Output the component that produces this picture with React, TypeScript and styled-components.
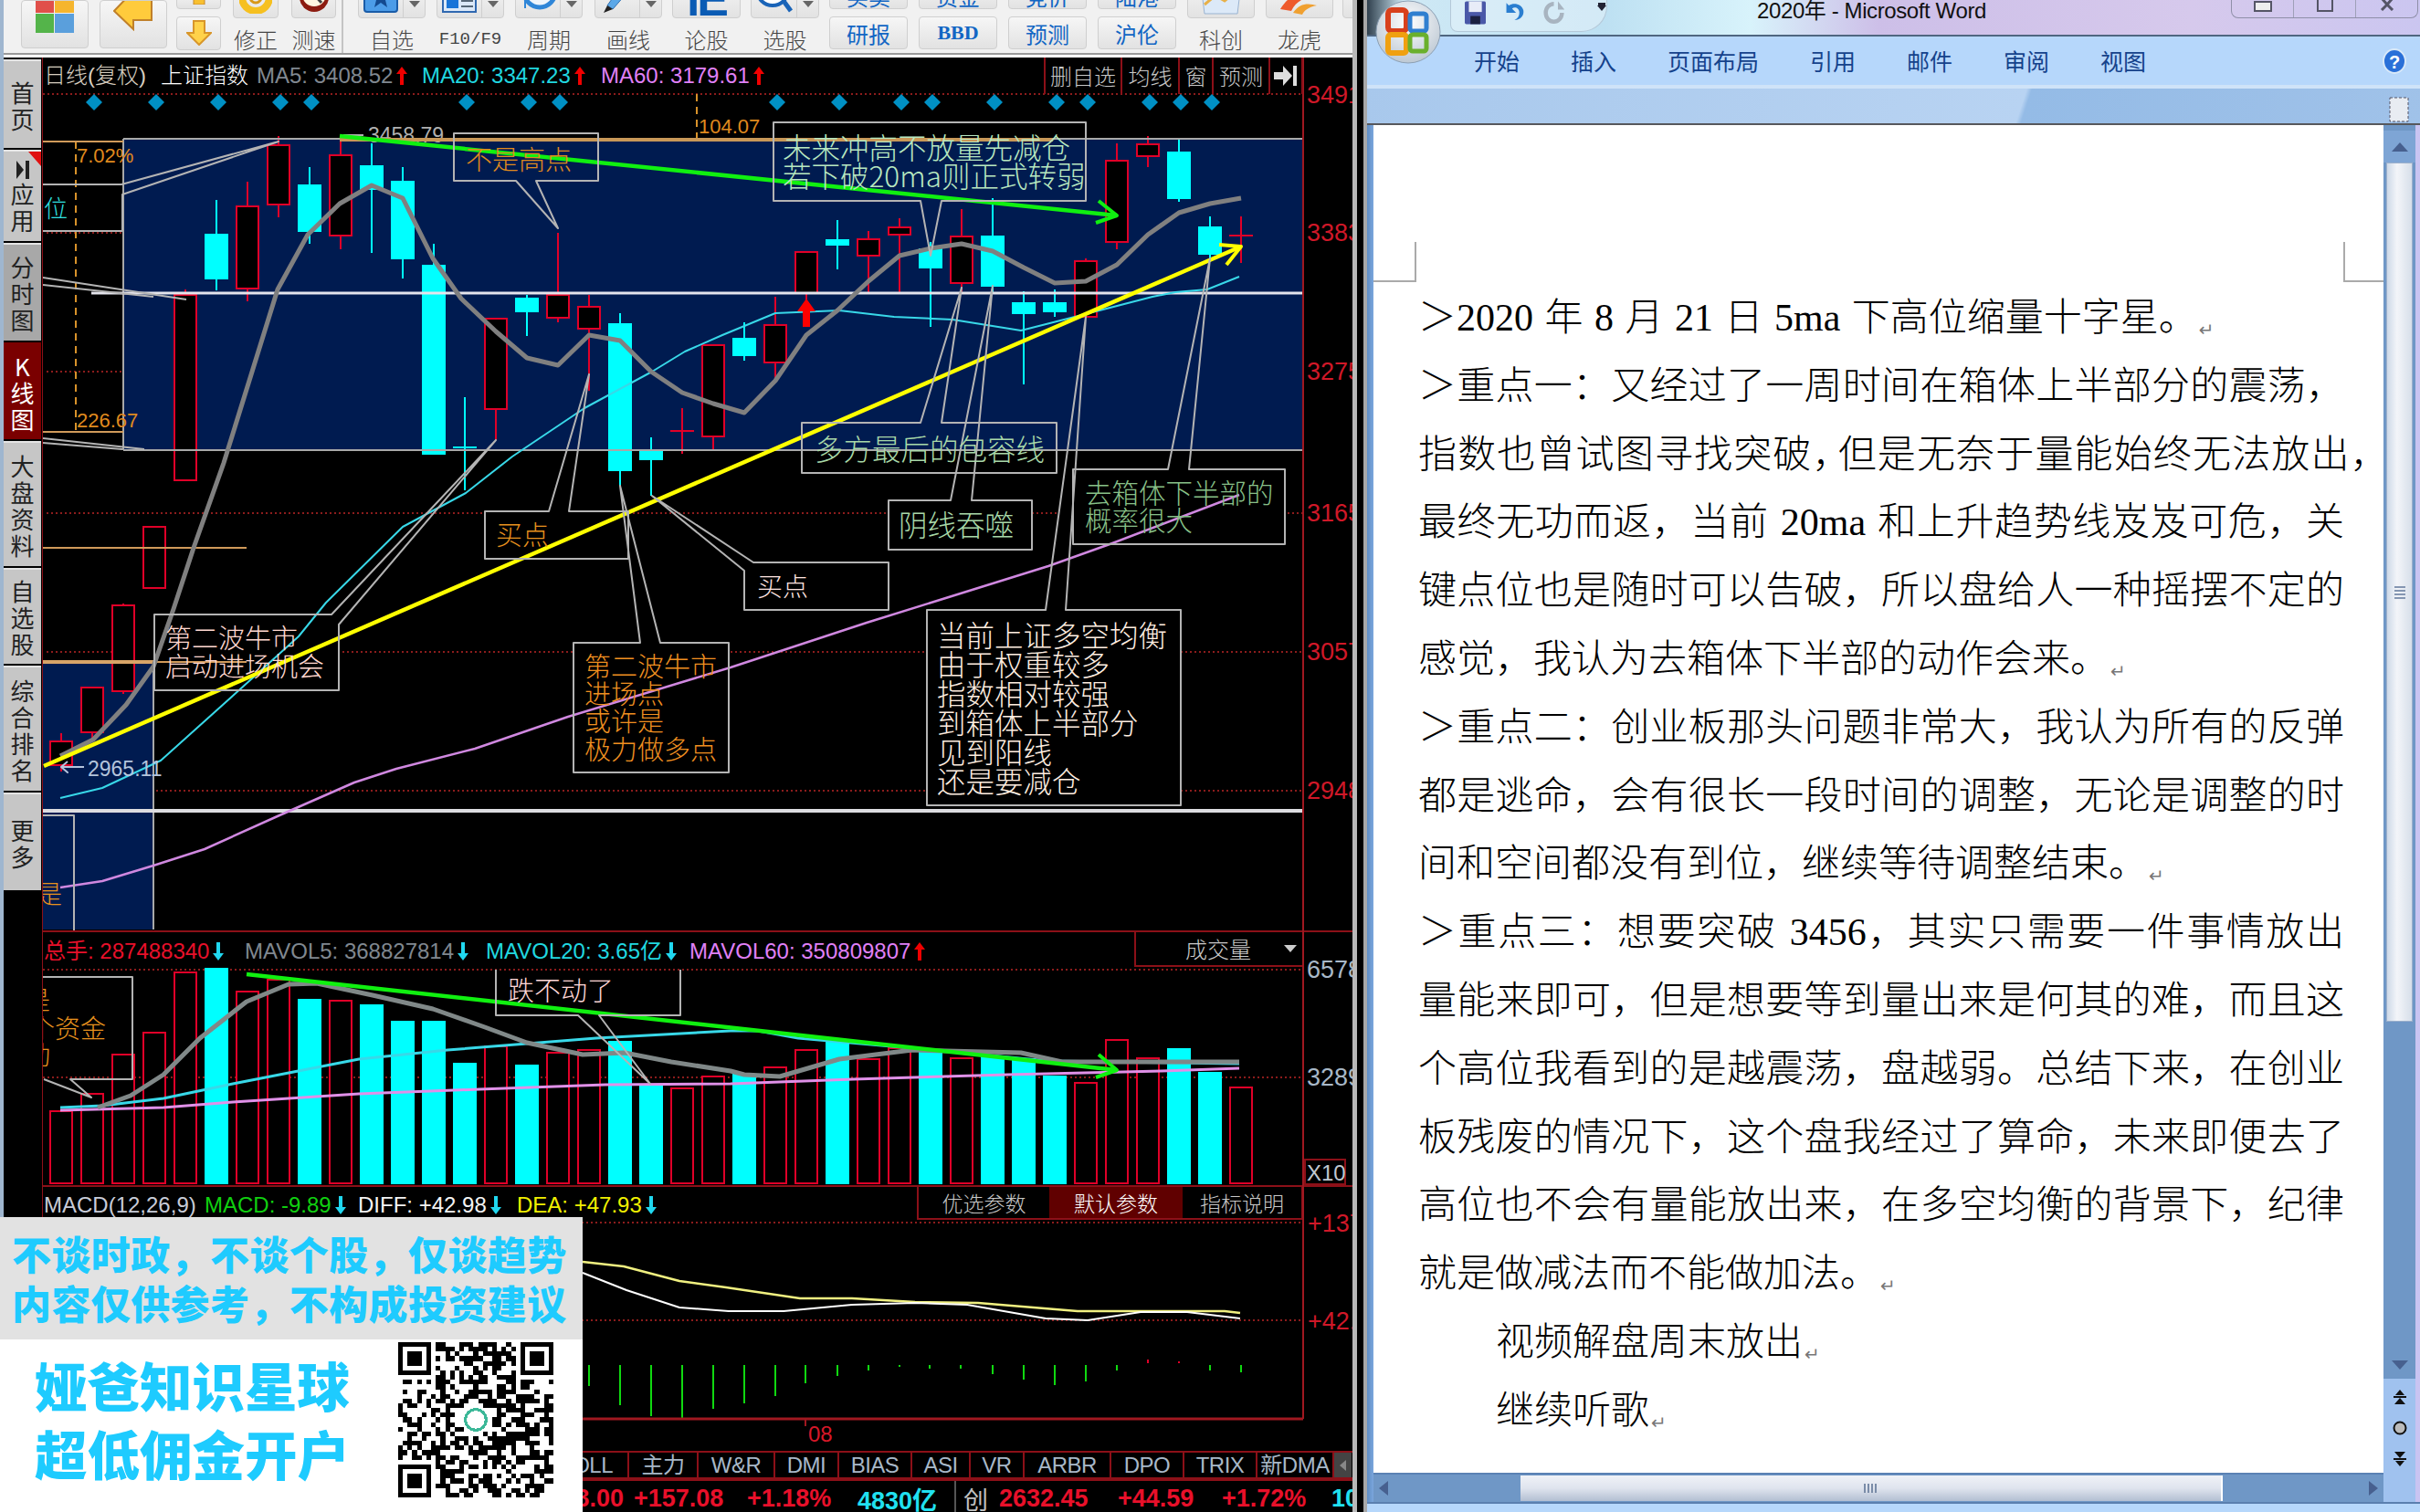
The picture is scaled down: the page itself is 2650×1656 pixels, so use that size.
import React from "react";
import styled, { createGlobalStyle } from "styled-components";

const SANS = `"Liberation Sans", "Noto Sans CJK SC", sans-serif`;
const CJK = `"Noto Sans CJK SC", "Liberation Sans", sans-serif`;
const RED = "#e00028";
const DARK = "#8c1018";

const Global = createGlobalStyle`
  html, body { margin: 0; padding: 0; background: #000; overflow: hidden; }
  #root { width: 2650px; height: 1656px; }
`;

const Page = styled.div`
  position: relative; display: flex; width: 2650px; height: 1656px; overflow: hidden;
`;

/* ---------- trading window ---------- */
const TradeWindow = styled.div`
  width: 1481px; height: 1656px; flex: none; display: flex; flex-direction: column;
  border-left: 4px solid #9fb6cf; box-sizing: border-box; overflow: hidden; background: #000;
`;
const Toolbar = styled.div`
  height: 63px; flex: none; box-sizing: border-box; display: flex; align-items: flex-end; overflow: hidden;
  background: #f1f1f1; border-bottom: 3px solid #fff; box-shadow: inset 0 -2px 0 #9a9a9a;
  padding-left: 19px; padding-bottom: 2px; font-family: ${CJK}; color: #444; font-weight: 300;
`;
const ToolItem = styled.div<{ $w: number; $ml: number }>`
  width: ${(p) => p.$w}px; margin-left: ${(p) => p.$ml}px; flex: none; display: flex; flex-direction: column;
  align-items: stretch; padding-bottom: 3px;
`;
const Tile = styled.div<{ $h: number; $pb?: number }>`
  height: ${(p) => p.$h}px; box-sizing: border-box; display: flex; justify-content: center; align-items: flex-end;
  padding-bottom: ${(p) => p.$pb ?? 4}px; overflow: hidden;
  background: linear-gradient(#f6f6f6, #e2e2e2); border: 1px solid #cfcfcf; border-radius: 4px;
`;
const BigTile = styled(Tile)`
  margin-bottom: 2px;
`;
const SplitTile = styled(Tile)`
  justify-content: flex-start; padding: 0;
`;
const SplitIcon = styled.div`
  flex: 1; height: 100%; box-sizing: border-box; display: flex; justify-content: center; align-items: flex-end; padding-bottom: 4px;
`;
const SplitArrow = styled.div`
  width: 24px; height: 100%; box-sizing: border-box; border-left: 1px solid #cfcfcf; display: flex; justify-content: center; padding-top: 22px;
  &::after { content: ""; width: 0; height: 0; border-left: 6px solid transparent; border-right: 6px solid transparent; border-top: 7px solid #666; margin-top: -2px; }
`;
const ToolLabel = styled.div<{ $mono?: boolean }>`
  height: 24px; margin-top: 11px; line-height: 24px; text-align: center; white-space: nowrap;
  font-size: ${(p) => (p.$mono ? 19 : 24)}px; font-family: ${(p) => (p.$mono ? `"Liberation Mono", monospace` : CJK)};
`;
const ToolSep = styled.div`
  width: 2px; height: 60px; margin-left: 6px; background: #c4c4c4; flex: none;
`;
const IeMark = styled.span`
  font: bold 52px/40px "Liberation Sans", sans-serif; color: #0a5bb4; letter-spacing: -3px;
`;
const SmallStack = styled.div<{ $ml: number }>`
  width: 49px; margin-left: ${(p) => p.$ml}px; flex: none; display: flex; flex-direction: column; gap: 8px; padding-bottom: 3px;
`;
const QuoteGrid = styled.div`
  width: 381px; margin-left: 11px; flex: none; display: grid; grid-template-columns: repeat(4, 86px);
  grid-template-rows: 30px 36px; gap: 8px 12px; padding-bottom: 4px;
`;
const QuoteBtn = styled.div`
  display: flex; align-items: center; justify-content: center; overflow: hidden; box-sizing: border-box;
  background: linear-gradient(#f6f6f6, #e2e2e2); border: 1px solid #cfcfcf; border-radius: 4px; color: #1266c4; font-size: 24px; font-weight: 400;
`;
const BbdText = styled.span`
  font: bold 22px "Liberation Serif", serif;
`;

const Body = styled.div`
  flex: 1; min-height: 0; display: flex;
`;
const Sidebar = styled.div`
  width: 42px; flex: none; display: flex; flex-direction: column; gap: 2px; box-sizing: border-box; padding: 2px 1px 0 0; background: #000;
`;
const SideTab = styled.div<{ $h: number; $tone?: "light" | "mid" | "active" }>`
  position: relative; height: ${(p) => p.$h}px; flex: none; box-sizing: border-box; display: flex; flex-direction: column; align-items: center; justify-content: center;
  font-family: ${CJK}; font-size: 26px; line-height: 29px; font-weight: 400;
  color: ${(p) => (p.$tone === "active" ? "#fff" : "#222")};
  background: ${(p) => (p.$tone === "active" ? "#7a0000" : p.$tone === "mid" ? "#a8a8a8" : "#c6c6c6")};
  border-top: 2px solid ${(p) => (p.$tone === "active" ? "#7a0000" : "#e4e4e4")};
`;
const SideChar = styled.span`
  display: block;
`;
const SideCorner = styled.div`
  position: absolute; top: 0; right: 0; width: 0; height: 0; border-top: 16px solid #e01010; border-left: 14px solid transparent;
`;
const ChartColumn = styled.div`
  position: relative; width: 1435px; flex: none; box-sizing: border-box; border-left: 1px solid ${DARK}; display: flex; flex-direction: column; overflow: hidden; background: #000;
`;
const LegendRow = styled.div<{ $h: number; $top?: boolean }>`
  height: ${(p) => p.$h}px; flex: none; box-sizing: border-box; display: flex; align-items: center; padding-left: 1px; white-space: nowrap;
  font-family: ${SANS}; font-size: 24px; line-height: 26px;
  border-top: ${(p) => (p.$top ? `2px solid ${DARK}` : "none")};
`;
const LegendItem = styled.div<{ $w: number; $c: string; $cjk?: boolean }>`
  width: ${(p) => p.$w}px; height: 26px; flex: none; display: flex; align-items: center; gap: 4px; color: ${(p) => p.$c};
  font-weight: ${(p) => (p.$cjk ? 300 : 400)};
`;
const RightGroup = styled.div`
  margin-left: auto; margin-right: 54px; height: 100%; display: flex; z-index: 2;
`;
const MiniBtn = styled.div<{ $w: number }>`
  width: ${(p) => p.$w}px; box-sizing: border-box; display: flex; align-items: center; justify-content: center; border-left: 2px solid ${DARK};
  color: #c8c8c8; font-family: ${CJK}; font-size: 24px; font-weight: 300;
  &:last-child { border-right: 2px solid ${DARK}; }
`;
const VolSelect = styled.div`
  margin-left: auto; margin-right: 54px; width: 185px; height: 38px; align-self: flex-start; box-sizing: border-box; border-left: 2px solid ${DARK}; border-bottom: 2px solid ${DARK};
  display: flex; align-items: center; padding-left: 54px; gap: 36px; color: #ccc; font-family: ${CJK}; font-size: 24px; font-weight: 300;
  &::after { content: ""; width: 0; height: 0; border-left: 7px solid transparent; border-right: 7px solid transparent; border-top: 8px solid #ccc; }
`;
const MacdTabs = styled.div`
  margin-left: auto; margin-right: 54px; height: 36px; align-self: flex-start; display: flex; box-sizing: border-box; border: 2px solid ${DARK}; border-top: none;
`;
const MacdTab = styled.div<{ $w: number; $on?: boolean }>`
  width: ${(p) => p.$w}px; display: flex; align-items: center; justify-content: center; font-family: ${CJK}; font-size: 23px; font-weight: 300;
  color: ${(p) => (p.$on ? "#fff" : "#c8c8c8")}; background: ${(p) => (p.$on ? "#600000" : "transparent")};
`;
const Canvas = styled.svg<{ $h: number }>`
  display: block; width: 1434px; height: ${(p) => p.$h}px; flex: none; overflow: visible;
`;
const DateRow = styled.div`
  height: 35px; flex: none; box-sizing: border-box; padding-left: 838px; color: #d81828; font: 24px/34px ${SANS};
`;
const IndexTabs = styled.div`
  height: 33px; flex: none; display: flex; box-sizing: border-box; border-top: 2px solid ${DARK}; border-bottom: 4px solid ${DARK}; font: 24px/27px ${SANS}; color: #a8b8c8; letter-spacing: -0.5px;
`;
const IndexTab = styled.div<{ $w: number; $pad?: number }>`
  width: ${(p) => p.$w}px; flex: none; box-sizing: border-box; border-right: 2px solid ${DARK}; text-align: ${(p) => (p.$pad ? "right" : "center")}; padding-right: ${(p) => p.$pad ?? 0}px; font-family: ${SANS}; white-space: nowrap;
`;
const IndexScroll = styled.div`
  width: 19px; flex: none; background: #444; display: flex; align-items: center; justify-content: center;
  &::after { content: ""; border-right: 7px solid #888; border-top: 6px solid transparent; border-bottom: 6px solid transparent; }
`;
const StatusRow = styled.div`
  flex: 1; display: flex; align-items: center; font: bold 27px ${SANS}; color: #e8102a; white-space: nowrap; box-sizing: border-box; padding-bottom: 1px;
`;
const StatusCell = styled.div<{ $w: number; $c?: string; $pad?: number; $weight?: number }>`
  width: ${(p) => p.$w}px; flex: none; color: ${(p) => p.$c ?? "inherit"}; text-align: ${(p) => (p.$pad ? "right" : "left")}; padding-right: ${(p) => p.$pad ?? 0}px; box-sizing: border-box; font-weight: ${(p) => p.$weight ?? 400};
`;
const StatusSep = styled.div`
  width: 2px; height: 100%; background: #555; margin-right: 8px; flex: none;
`;

/* svg parts */
const Wick = styled.line<{ $c: string }>`stroke: ${(p) => p.$c}; stroke-width: 2;`;
const Body3 = styled.rect<{ $up?: boolean }>`
  fill: ${(p) => (p.$up ? "#000" : "#00ffff")}; stroke: ${(p) => (p.$up ? RED : "#00ffff")}; stroke-width: 2;
`;
const Dotted = styled.line<{ $c?: string }>`stroke: ${(p) => p.$c ?? "#8c1c1c"}; stroke-width: 2; stroke-dasharray: 2 3;`;
const Trend = styled.polyline<{ $c: string; $w: number }>`
  fill: none; stroke: ${(p) => p.$c}; stroke-width: ${(p) => p.$w}; stroke-linejoin: round;
`;
const Plain = styled.line<{ $c: string; $w: number }>`stroke: ${(p) => p.$c}; stroke-width: ${(p) => p.$w};`;
const Navy = styled.rect`fill: #001b50;`;
const CalloutPath = styled.path`fill: none; stroke: #b4b4b4; stroke-width: 2; stroke-linejoin: round;`;
const NoteText = styled.text<{ $c: string; $s: number }>`
  fill: ${(p) => p.$c}; font-size: ${(p) => p.$s}px; font-family: ${CJK}; font-weight: 300;
`;
const NumText = styled.text<{ $c: string; $s: number }>`
  fill: ${(p) => p.$c}; font-size: ${(p) => p.$s}px; font-family: ${SANS};
`;
const Diamond = styled.polygon`fill: #0090c4;`;

/* ---------- overlay banner ---------- */
const Banner = styled.div`
  position: absolute; left: 0; top: 1333px; width: 638px; height: 323px; z-index: 5; background: #fff; display: flex; flex-direction: column;
`;
const BannerTop = styled.div`
  height: 134px; flex: none; background: #e2e2e2; box-sizing: border-box; padding: 12px 0 0 13px; font: 900 43px/54px ${CJK}; color: #1ecbff; white-space: nowrap; letter-spacing: 0.4px;
`;
const BannerBottom = styled.div`
  flex: 1; display: flex; box-sizing: border-box; padding-left: 38px;
`;
const BannerText = styled.div`
  width: 398px; flex: none; padding-top: 12px; font: 900 57.5px/75px ${CJK}; color: #1ecbff; white-space: nowrap;
`;
const QrBox = styled.svg`
  width: 170px; height: 170px; margin-top: 3px; flex: none; display: block;
`;

/* ---------- word ---------- */
const Gutter = styled.div`
  width: 16px; flex: none; box-sizing: border-box; background: linear-gradient(90deg, #b8b8b8 0 5px, #000 5px 12px, #a8a8a8 12px);
`;
const WordWindow = styled.div`
  position: relative; flex: 1; min-width: 0; display: flex; flex-direction: column; font-family: ${CJK};
`;
const TitleBar = styled.div`
  height: 38px; flex: none; display: flex; align-items: flex-start; box-sizing: border-box;
  background: linear-gradient(90deg, #30404e 0, #cfe9f5 40px, #bde0f2 260px, #d8f3fb 420px, #cdbfe8 560px, #d6c9ec 900px, #cbc6f0 100%);
`;
const Qat = styled.div`
  width: 172px; height: 35px; margin-left: 91px; flex: none; box-sizing: border-box; position: relative; display: flex; align-items: flex-start; padding-left: 15px; gap: 19px;
  background: rgba(230, 242, 250, 0.55); border: 1px solid #b4c8d8; border-top: none; border-radius: 0 0 28px 8px;
`;
const QatArrow = styled.div`
  margin: 6px 0 0 17px; flex: none; width: 0; height: 0; border-left: 5px solid transparent; border-right: 5px solid transparent; border-top: 6px solid #223; box-shadow: 0 -4px 0 -1px #223;
`;
const TitleText = styled.div`
  flex: 1; text-align: center; padding-right: 104px; font: 24px/24px ${SANS}; color: #111; white-space: nowrap; letter-spacing: -0.4px;
`;
const WinButtons = styled.div`
  width: 205px; height: 20px; margin-right: 2px; flex: none; display: flex; box-sizing: border-box; border: 1px solid #8f8fa8; border-top: none; border-radius: 0 0 8px 8px;
`;
const WinBtn = styled.div`
  flex: 1; display: flex; align-items: flex-start; justify-content: center; border-left: 1px solid #9fa0b8;
  &:first-child { border-left: none; }
`;
const TabBar = styled.div`
  position: relative; height: 59px; flex: none; box-sizing: border-box; display: flex; align-items: center; gap: 56px; padding: 0 0 2px 117px;
  background: #b6d7fb; border-top: 2px solid #4f6680; border-bottom: 4px solid #cfe3f8; font-size: 25px; font-weight: 400; color: #15428b;
`;
const WordTab = styled.span`flex: none; white-space: nowrap;`;
const HelpWrap = styled.div`
  position: absolute; right: 15px; top: 12px;
`;
const RibbonBand = styled.div`
  position: relative; height: 40px; flex: none; box-sizing: border-box; border-bottom: 2px solid #57585c;
  background: linear-gradient(108deg, #a8c8ec 0, #b8d3f2 62%, #94bbe6 62.5%, #a0c2e9 100%);
`;
const RulerIcon = styled.svg`
  position: absolute; right: 10px; top: 8px; width: 26px; height: 34px; z-index: 2;
`;
const OfficeBtn = styled.svg`
  position: absolute; left: 9px; top: 0; width: 72px; height: 70px; z-index: 3;
`;
const MainRow = styled.div`
  flex: 1; min-height: 0; display: flex; background: #6f97c6;
`;
const LeftEdge = styled.div`
  width: 7px; flex: none; background: linear-gradient(90deg, #5f8dc4, #7ba6dc);
`;
const RightEdge = styled.div`
  width: 5px; flex: none; background: #c9c4f2;
`;
const DocColumn = styled.div`
  flex: 1; min-width: 0; display: flex; flex-direction: column;
`;
const DocPage = styled.div`
  position: relative; flex: 1; min-height: 0; background: #fff; box-sizing: border-box; padding: 174px 0 0 49px; overflow: hidden;
  font-family: "Liberation Serif", "Noto Sans CJK SC", serif; font-weight: 300; font-size: 42px; color: #000; word-spacing: 2px;
`;
const DocLine = styled.div<{ $width?: number; $indent?: boolean; $tracking?: number }>`
  height: 74.8px; line-height: 74.8px; box-sizing: border-box;
  padding-left: ${(p) => (p.$indent ? 85 : 0)}px;
  letter-spacing: ${(p) => p.$tracking ?? 0}px;
  width: ${(p) => (p.$width ? `${p.$width}px` : "auto")};
  white-space: ${(p) => (p.$width ? "normal" : "nowrap")};
  text-align: ${(p) => (p.$width ? "justify" : "left")};
  text-align-last: ${(p) => (p.$width ? "justify" : "left")};
`;
const Squeeze = styled.span`margin-right: -15px;`;
const ParaMark = styled.span`
  font: 20px "DejaVu Sans", sans-serif; color: #777; margin-left: 2px; vertical-align: -6px;
`;
const CornerMark = styled.div<{ $side: "left" | "right" }>`
  position: absolute; top: 128px; ${(p) => p.$side}: 0; width: ${(p) => (p.$side === "left" ? 47 : 44)}px; height: 44px; box-sizing: border-box; border-bottom: 2px solid #aaa;
  ${(p) => (p.$side === "left" ? "border-right" : "border-left")}: 2px solid #aaa;
`;
const HScroll = styled.div`
  height: 32px; flex: none; position: relative; display: flex; align-items: center; box-sizing: border-box; background: #6f97c6; border-top: 2px solid #5b82b4; padding-left: 161px;
`;
const HThumb = styled.div`
  width: 769px; height: 28px; box-sizing: border-box; display: flex; align-items: center; justify-content: center; background: linear-gradient(#f0f2f7, #dfe4ee 50%, #b3bfd2); border-right: 2px solid #fff;
  &::after { content: ""; width: 16px; height: 10px; background: repeating-linear-gradient(90deg, #7a8ca8 0 2px, transparent 2px 4px); }
`;
const Tri = styled.div<{ $dir: "left" | "right" | "up" | "down" }>`
  width: 0; height: 0; flex: none;
  ${(p) =>
    p.$dir === "left" ? "border-right: 10px solid #47608f; border-top: 8px solid transparent; border-bottom: 8px solid transparent;" :
    p.$dir === "right" ? "border-left: 10px solid #47608f; border-top: 8px solid transparent; border-bottom: 8px solid transparent;" :
    p.$dir === "up" ? "border-bottom: 10px solid #47608f; border-left: 9px solid transparent; border-right: 9px solid transparent;" :
    "border-top: 10px solid #47608f; border-left: 9px solid transparent; border-right: 9px solid transparent;"}
`;
const HLeft = styled.div`position: absolute; left: 6px; top: 7px;`;
const HRight = styled.div`position: absolute; right: 6px; top: 7px;`;
const VScroll = styled.div`
  width: 35px; flex: none; display: flex; flex-direction: column; background: #6f97c6; box-sizing: border-box; padding-top: 6px;
`;
const VUp = styled.div`
  height: 35px; flex: none; display: flex; align-items: center; justify-content: center; background: #7ea5d5;
`;
const VThumb = styled.div`
  height: 941px; margin: 0 3px; flex: none; box-sizing: border-box; display: flex; align-items: center; justify-content: center;
  background: linear-gradient(90deg, #cdd9e8, #f3f5f9 40%, #d7dfea); border: 1px solid #9cb0cc;
  &::after { content: ""; width: 12px; height: 14px; background: repeating-linear-gradient(#8496b2 0 2px, transparent 2px 4px); }
`;
const VTrack = styled.div`
  flex: 1; display: flex; align-items: flex-end; justify-content: center; padding-bottom: 10px;
`;
const VBrowse = styled.div`
  height: 135px; flex: none; box-sizing: border-box; background: #a0c2ef; padding: 12px 0 0 0; display: flex; flex-direction: column; align-items: center; gap: 14px;
`;
const StatusBar = styled.div`
  height: 11px; flex: none; background: #b6d7fb; border-top: 2px solid #5a7faf; box-sizing: border-box;
`;

/* ---------- data ---------- */
const cx = (k: number) => 67 + 34 * k;
type C = [number, "u" | "d" | "xu" | "xd", number, number, number, number];
const candles: C[] = [
  [0, "u", 803, 812, 838, 845], [1, "u", 753, 753, 802, 812], [2, "u", 661, 663, 757, 760], [3, "u", 577, 577, 644, 644],
  [4, "u", 317, 323, 526, 526], [5, "d", 219, 257, 305, 318], [6, "u", 199, 226, 316, 330], [7, "u", 149, 159, 224, 238],
  [8, "d", 183, 203, 253, 267], [9, "u", 153, 170, 258, 273], [10, "d", 157, 182, 207, 277], [11, "d", 183, 199, 283, 305],
  [12, "d", 267, 291, 497, 497], [13, "xd", 435, 490, 490, 537], [14, "u", 349, 349, 448, 482], [15, "d", 323, 327, 341, 368],
  [16, "u", 255, 323, 348, 353], [17, "u", 323, 336, 360, 428], [18, "d", 343, 355, 515, 532], [19, "d", 479, 495, 503, 543],
  [20, "xu", 447, 472, 472, 497], [21, "u", 378, 378, 478, 493], [22, "d", 353, 371, 389, 395], [23, "u", 325, 356, 397, 415],
  [24, "u", 276, 276, 321, 330], [25, "d", 241, 263, 268, 295], [26, "u", 253, 262, 280, 321], [27, "u", 239, 249, 257, 321],
  [28, "d", 265, 273, 293, 358], [29, "u", 229, 259, 310, 320], [30, "d", 217, 259, 313, 322], [31, "d", 319, 332, 343, 421],
  [32, "d", 317, 332, 341, 347], [33, "u", 283, 286, 347, 347], [34, "u", 157, 176, 265, 273], [35, "u", 149, 158, 171, 183],
  [36, "d", 153, 167, 217, 221], [37, "d", 237, 249, 278, 287], [38, "xu", 237, 258, 258, 288],
];
const ma5 = "66,828 102,810 138,772 168,730 190,667 212,600 245,507 304,317 337,257 372,223 407,203 441,217 474,283 505,327 543,363 577,392 611,400 645,367 679,373 713,407 747,430 781,442 815,452 849,417 883,367 917,340 951,308 985,280 1019,272 1053,267 1087,275 1121,293 1155,310 1189,308 1223,290 1257,257 1291,233 1325,223 1359,217";
const ma20 = "66,874 112,863 176,833 265,753 327,697 357,660 441,577 510,540 561,500 640,447 714,407 750,385 791,367 849,343 919,340 979,347 1043,350 1118,362 1173,348 1262,325 1287,320 1322,317 1357,303";
const ma60 = "66,972 112,965 168,948 224,930 306,893 388,857 434,842 520,820 622,785 800,731 949,682 1148,620 1218,595 1357,542";
const vols: [number, boolean][] = [
  [1217, true], [1198, true], [1155, true], [1131, true], [1065, true], [1061, false], [1086, true], [1073, true], [1095, false], [1096, true],
  [1101, false], [1119, false], [1119, false], [1165, false], [1146, true], [1167, false], [1153, true], [1150, true], [1141, false], [1188, false],
  [1192, true], [1179, true], [1177, false], [1169, true], [1150, true], [1139, false], [1160, true], [1148, true], [1150, false], [1159, true],
  [1157, false], [1160, false], [1179, false], [1186, true], [1139, true], [1159, true], [1149, false], [1175, false], [1191, true],
];
const vol5 = "107,1213 143,1200 179,1177 219,1137 270,1097 316,1078 347,1077 408,1090 474,1105 531,1125 577,1142 638,1155 684,1153 735,1163 800,1173 815,1177 854,1179 919,1160 999,1150 1118,1153 1163,1163 1357,1163";
const vol20 = "66,1213 112,1211 179,1203 255,1187 393,1160 490,1150 653,1137 800,1129 830,1129 874,1137 999,1148 1148,1162 1357,1165";
const vol60 = "66,1216 179,1213 255,1207 393,1198 525,1193 663,1188 800,1187 934,1182 1103,1177 1272,1173 1357,1170";
const dea = "638,1382 683,1387 744,1403 795,1410 876,1422 933,1422 1002,1426 1071,1427 1180,1436 1341,1436 1358,1438";
const diff = "638,1394 686,1413 744,1432 798,1436 858,1436 933,1429 1002,1427 1059,1429 1145,1444 1191,1446 1249,1437 1300,1437 1358,1444";
const macdBars: [number, number, number, string][] = [
  [645, 1495, 1518, "#10d810"], [679, 1495, 1539, "#10d810"], [713, 1495, 1551, "#10d810"], [747, 1495, 1553, "#10d810"], [781, 1495, 1543, "#10d810"],
  [815, 1495, 1537, "#10d810"], [849, 1495, 1529, "#10d810"], [882, 1495, 1515, "#10d810"], [917, 1495, 1507, "#10d810"], [951, 1495, 1501, "#10d810"],
  [985, 1495, 1497, "#10d810"], [1018, 1495, 1499, "#10d810"], [1052, 1495, 1499, "#10d810"], [1087, 1495, 1505, "#10d810"], [1121, 1495, 1511, "#10d810"],
  [1155, 1495, 1517, "#10d810"], [1189, 1495, 1513, "#10d810"], [1223, 1495, 1501, "#10d810"], [1257, 1489, 1493, "#e00028"], [1291, 1491, 1493, "#e00028"],
  [1325, 1495, 1501, "#10d810"], [1359, 1495, 1503, "#10d810"],
];
const diamonds = [103, 171, 239, 307, 341, 511, 579, 613, 851, 919, 987, 1021, 1089, 1157, 1191, 1259, 1293, 1327];
const dotted: [number, number, number][] = [
  [103, 47, 1427], [255, 51, 133], [407, 51, 133],
  [562, 51, 531], [562, 688, 973], [562, 1130, 1158], [562, 1410, 1427],
  [714, 375, 628], [714, 800, 1015], [714, 1293, 1427], [714, 51, 135],
  [866, 171, 1015], [866, 1293, 1427],
];
const callouts = [
  "M497 146 H655 V198 H587 L611 250 L565 198 H497 Z",
  "M847 134 H1189 V220 H1031 L1019 280 L1008 220 H847 Z",
  "M878 463 H1008 L1053 315 L1031 463 H1157 V518 H878 Z",
  "M973 548 H1041 L1087 313 L1064 548 H1130 V602 H973 Z",
  "M1175 514 H1279 L1325 283 L1302 514 H1407 V596 H1175 Z",
  "M825 616 H973 V668 H815 V625 L714 543 Z",
  "M1015 668 H1145 L1189 347 L1167 668 H1293 V882 H1015 Z",
  "M531 560 H601 L645 410 L623 560 H688 V612 H531 Z",
  "M628 704 H701 L679 532 L723 704 H798 V846 H628 Z",
  "M169 673 H363 L543 482 L371 684 V756 H169 Z",
  "M47 202 H133 L305 155 L134 213 V253 H47",
  "M47 893 H81 V1019",
  "M47 304 L204 328 M47 312 L168 325 M47 480 L158 492 M47 485 L134 492",
];
const notes: [number, number, number, string, string][] = [
  [510, 186, 29, "#e08a1e", "不是高点"],
  [857, 174, 31.5, "#b8e8c0", "未来冲高不放量先减仓"],
  [857, 205, 31.5, "#b8e8c0", "若下破20ma则正式转弱"],
  [892, 504, 31.5, "#a8d8a8", "多方最后的包容线"],
  [984, 587, 31.5, "#a8d8a8", "阴线吞噬"],
  [1188, 551, 29.5, "#88c088", "去箱体下半部的"],
  [1188, 581, 29.5, "#88c088", "概率很大"],
  [829, 653, 28, "#ffe4e0", "买点"],
  [1026, 708, 31.5, "#ffeee0", "当前上证多空均衡"],
  [1026, 740, 31.5, "#ffeee0", "由于权重较多"],
  [1026, 772, 31.5, "#ffeee0", "指数相对较强"],
  [1026, 804, 31.5, "#ffeee0", "到箱体上半部分"],
  [1026, 836, 31.5, "#ffeee0", "见到阳线"],
  [1026, 868, 31.5, "#ffeee0", "还是要减仓"],
  [543, 597, 29, "#e8921e", "买点"],
  [640, 741, 29, "#f09020", "第二波牛市"],
  [640, 771, 29, "#f09020", "进场点"],
  [640, 801, 29, "#f09020", "或许是"],
  [640, 832, 29, "#f09020", "极力做多点"],
  [181, 710, 29, "#ffd8d0", "第二波牛市"],
  [181, 741, 29, "#ffd8d0", "启动进场机会"],
  [48, 238, 26, "#30e0e0", "位"],
  [40, 990, 28, "#e8921e", "是"],
];
const axisMain: [number, string][] = [[104, "3491"], [255, "3383"], [407, "3275"], [562, "3165"], [714, "3057"], [866, "2948"]];

const Arrow: React.FC<{ c: string; up?: boolean }> = ({ c, up }) => (
  <svg width="12" height="20" viewBox="0 0 12 20">
    <path d={up ? "M6 0 L12 8 H8 V20 H4 V8 H0 Z" : "M6 20 L12 12 H8 V0 H4 V12 H0 Z"} fill={c} />
  </svg>
);

/* QR drawing */
const qrCells: [number, number][] = (() => {
  const n = 33;
  const out: [number, number][] = [];
  const inF = (x: number, y: number, ox: number, oy: number) => x >= ox && x < ox + 8 && y >= oy && y < oy + 8;
  const fDark = (x: number, y: number) => {
    if (x === 7 || y === 7) return false;
    if (x === 0 || x === 6 || y === 0 || y === 6) return true;
    return x >= 2 && x <= 4 && y >= 2 && y <= 4;
  };
  let s = 48271;
  for (let y = 0; y < n; y++) {
    for (let x = 0; x < n; x++) {
      s = (s * 16807) % 2147483647;
      if (inF(x, y, 0, 0)) { if (fDark(x, y)) out.push([x, y]); continue; }
      if (inF(x, y, 25, 0)) { if (fDark(32 - x, y)) out.push([x, y]); continue; }
      if (inF(x, y, 0, 25)) { if (fDark(x, 32 - y)) out.push([x, y]); continue; }
      if (Math.hypot(x - 16, y - 16) < 3.6) continue;
      if ((s >> 7) % 100 < 52) out.push([x, y]);
    }
  }
  return out;
})();

const SideTabs = () => (
  <Sidebar>
    <SideTab $h={97}>{"首页".split("").map((c) => <SideChar key={c}>{c}</SideChar>)}</SideTab>
    <SideTab $h={100}>
      <SideCorner />
      <svg width="14" height="22" viewBox="0 0 14 22"><path d="M0 1 L8 11 L0 21 Z M10 1 H14 V21 H10 Z" fill="#222" /></svg>
      {"应用".split("").map((c) => <SideChar key={c}>{c}</SideChar>)}
    </SideTab>
    <SideTab $h={107} $tone="mid">{"分时图".split("").map((c) => <SideChar key={c}>{c}</SideChar>)}</SideTab>
    <SideTab $h={106} $tone="active">{"K线图".split("").map((c) => <SideChar key={c}>{c}</SideChar>)}</SideTab>
    <SideTab $h={137}>{"大盘资料".split("").map((c) => <SideChar key={c}>{c}</SideChar>)}</SideTab>
    <SideTab $h={105}>{"自选股".split("").map((c) => <SideChar key={c}>{c}</SideChar>)}</SideTab>
    <SideTab $h={137}>{"综合排名".split("").map((c) => <SideChar key={c}>{c}</SideChar>)}</SideTab>
    <SideTab $h={107}>{"更多".split("").map((c) => <SideChar key={c}>{c}</SideChar>)}</SideTab>
  </Sidebar>
);

const TopBar = () => (
  <Toolbar>
    <ToolItem $w={74} $ml={0}>
      <BigTile $h={53} $pb={16}>
        <svg width="42" height="42" viewBox="0 0 42 42">
          <rect width="20" height="20" fill="#e0504a" /><rect x="21" width="21" height="20" fill="#f5b52e" />
          <rect y="21" width="20" height="21" fill="#54b44a" /><rect x="21" y="21" width="21" height="21" fill="#5a9fdc" />
        </svg>
      </BigTile>
    </ToolItem>
    <ToolItem $w={74} $ml={12}>
      <BigTile $h={53} $pb={18}>
        <svg width="44" height="40" viewBox="0 0 44 40"><path d="M1 18 L22 38 V28 H42 V6 H22 V-4 Z" fill="#ffcb3c" stroke="#c0802a" strokeWidth="2" /></svg>
      </BigTile>
    </ToolItem>
    <SmallStack $ml={10}>
      <Tile $h={20} $pb={4}><svg width="26" height="10" viewBox="0 0 26 10"><rect x="7" width="12" height="10" fill="#f8c030" stroke="#c8882a" /></svg></Tile>
      <Tile $h={37} $pb={4}>
        <svg width="28" height="28" viewBox="0 0 28 28"><path d="M14 27 L27 14 H20 V1 H8 V14 H1 Z" fill="#ffd24a" stroke="#d8962a" strokeWidth="2" /></svg>
      </Tile>
    </SmallStack>
    <ToolItem $w={50} $ml={13}>
      <Tile $h={40}>
        <svg width="36" height="34" viewBox="0 0 36 34"><circle cx="18" cy="16" r="15" fill="none" stroke="#f6c020" strokeWidth="8" /><circle cx="18" cy="16" r="6" fill="none" stroke="#d89818" strokeWidth="3" /></svg>
      </Tile>
      <ToolLabel>修正</ToolLabel>
    </ToolItem>
    <ToolItem $w={49} $ml={14}>
      <Tile $h={40}>
        <svg width="36" height="34" viewBox="0 0 36 34"><circle cx="18" cy="16" r="16" fill="#8c1c10" /><circle cx="18" cy="13" r="13" fill="#fff6e0" /><path d="M18 13 L26 22" stroke="#444" strokeWidth="3" /></svg>
      </Tile>
      <ToolLabel>测速</ToolLabel>
    </ToolItem>
    <ToolSep />
    <ToolItem $w={74} $ml={16}>
      <SplitTile $h={40}>
        <SplitIcon>
          <svg width="38" height="36" viewBox="0 0 38 36"><rect x="1" width="36" height="34" rx="3" fill="#4c9ce8" stroke="#1a5ca8" strokeWidth="2" /><path d="M19 8 L22 16 L30 16 L24 21 L26 29 L19 24 L12 29 L14 21 L8 16 L16 16 Z" fill="#144a90" /></svg>
        </SplitIcon>
        <SplitArrow />
      </SplitTile>
      <ToolLabel>自选</ToolLabel>
    </ToolItem>
    <ToolItem $w={74} $ml={12}>
      <SplitTile $h={40}>
        <SplitIcon>
          <svg width="38" height="36" viewBox="0 0 38 36"><rect x="1" width="36" height="34" fill="#dbe8f8" stroke="#3068b0" strokeWidth="2" /><rect x="5" y="12" width="13" height="18" fill="#1874d8" /><path d="M21 16 H34 M21 22 H34 M21 28 H34" stroke="#567" strokeWidth="2" /></svg>
        </SplitIcon>
        <SplitArrow />
      </SplitTile>
      <ToolLabel $mono>F10/F9</ToolLabel>
    </ToolItem>
    <ToolItem $w={74} $ml={12}>
      <SplitTile $h={40}>
        <SplitIcon>
          <svg width="40" height="36" viewBox="0 0 40 36"><circle cx="22" cy="12" r="17" fill="#eef5fc" stroke="#2f86d8" strokeWidth="5" /><path d="M22 3 V13 L32 18" fill="none" stroke="#345" strokeWidth="3" /><rect x="3" y="5" width="7" height="12" fill="#2f86d8" /><path d="M6 0 V30" stroke="#2f86d8" strokeWidth="2" /></svg>
        </SplitIcon>
        <SplitArrow />
      </SplitTile>
      <ToolLabel>周期</ToolLabel>
    </ToolItem>
    <ToolItem $w={74} $ml={13}>
      <SplitTile $h={40}>
        <SplitIcon>
          <svg width="38" height="36" viewBox="0 0 38 36"><path d="M8 27 L26 2 L34 8 L14 31 Z" fill="#5ca8e8" stroke="#3070b0" /><path d="M8 27 L4 35 L14 31 Z" fill="#222" /></svg>
        </SplitIcon>
        <SplitArrow />
      </SplitTile>
      <ToolLabel>画线</ToolLabel>
    </ToolItem>
    <ToolItem $w={75} $ml={11}>
      <Tile $h={40} $pb={0}><IeMark>iE</IeMark></Tile>
      <ToolLabel>论股</ToolLabel>
    </ToolItem>
    <ToolItem $w={75} $ml={11}>
      <SplitTile $h={40}>
        <SplitIcon>
          <svg width="42" height="38" viewBox="0 0 42 38"><circle cx="19" cy="12" r="17" fill="#fff" stroke="#1a64b8" strokeWidth="4" /><path d="M31 24 L39 35" stroke="#1a64b8" strokeWidth="5" /><path d="M8 20 L15 10 L21 15 L30 3" fill="none" stroke="#e8242c" strokeWidth="4" /></svg>
        </SplitIcon>
        <SplitArrow />
      </SplitTile>
      <ToolLabel>选股</ToolLabel>
    </ToolItem>
    <QuoteGrid>
      <QuoteBtn>买卖</QuoteBtn><QuoteBtn>资金</QuoteBtn><QuoteBtn>竞价</QuoteBtn><QuoteBtn>陆港</QuoteBtn>
      <QuoteBtn>研报</QuoteBtn><QuoteBtn><BbdText>BBD</BbdText></QuoteBtn><QuoteBtn>预测</QuoteBtn><QuoteBtn>沪伦</QuoteBtn>
    </QuoteGrid>
    <ToolItem $w={74} $ml={11}>
      <Tile $h={40} $pb={2}>
        <svg width="52" height="36" viewBox="0 0 52 36"><path d="M4 2 H48 L44 34 H8 Z" fill="#dce9f8" stroke="#99b2d0" /><path d="M8 24 L20 14 L30 20 L44 8" fill="none" stroke="#e8b048" strokeWidth="3" /></svg>
      </Tile>
      <ToolLabel>科创</ToolLabel>
    </ToolItem>
    <ToolItem $w={74} $ml={12}>
      <Tile $h={40} $pb={3}>
        <svg width="46" height="30" viewBox="0 0 46 30"><path d="M2 24 C14 4 30 4 44 10 C30 10 20 14 14 26 Z" fill="#ee5a2c" /><path d="M16 28 C24 16 34 18 42 20 C32 22 28 26 26 30 Z" fill="#f0a030" /></svg>
      </Tile>
      <ToolLabel>龙虎</ToolLabel>
    </ToolItem>
    <ToolItem $w={40} $ml={10}>
      <Tile $h={40}><span /></Tile>
      <ToolLabel />
    </ToolItem>
  </Toolbar>
);

const MainChart = () => (
  <Canvas $h={916} viewBox="47 103 1434 916">
    <defs>
      <clipPath id="mainClip"><rect x="47" y="60" width="1434" height="959" /></clipPath>
    </defs>
    <g clipPath="url(#mainClip)">
      <Navy x={135} y={152} width={1292} height={341} />
      <Navy x={47} y={727} width={121} height={291} />
      {dotted.map(([y, a, b], i) => <Dotted key={i} x1={a} x2={b} y1={y} y2={y} />)}
      {diamonds.map((x) => <Diamond key={x} points={`${x - 9},112 ${x},103 ${x + 9},112 ${x},121`} />)}
      <Plain $c="#d8922a" $w={2} x1={83} x2={83} y1={155} y2={473} strokeDasharray="8 6" />
      <Plain $c="#d8922a" $w={2} x1={763} x2={763} y1={103} y2={153} strokeDasharray="8 6" />
      {candles.map(([k, t, hi, top, bot, lo]) => {
        const up = t === "u" || t === "xu";
        const c = up ? RED : "#00ffff";
        const x = cx(k);
        return (
          <g key={k}>
            <Wick $c={c} x1={x} x2={x} y1={hi} y2={lo} />
            {t === "xu" || t === "xd"
              ? <Wick $c={c} x1={x - 13} x2={x + 13} y1={top} y2={top} />
              : <Body3 $up={up} x={x - 12} y={top} width={24} height={bot - top} />}
          </g>
        );
      })}
      <Plain $c="#a8a8a8" $w={2} x1={135} x2={1427} y1={152} y2={152} />
      <Plain $c="#a8a8a8" $w={2} x1={135} x2={1427} y1={493} y2={493} />
      <Plain $c="#a8a8a8" $w={2} x1={135} x2={135} y1={152} y2={493} />
      <Plain $c="#a8a8a8" $w={2} x1={168} x2={168} y1={727} y2={1018} />
      <Plain $c="#e4e4ec" $w={3} x1={100} x2={1427} y1={321} y2={321} />
      <Plain $c="#dcdce0" $w={4} x1={47} x2={1427} y1={888} y2={888} />
      <Plain $c="#d09a5a" $w={2} x1={47} x2={135} y1={155} y2={155} />
      <Plain $c="#d09a5a" $w={2} x1={47} x2={135} y1={473} y2={473} />
      <Plain $c="#d09a5a" $w={2} x1={47} x2={270} y1={600} y2={600} />
      <Plain $c="#d8a468" $w={4} x1={47} x2={168} y1={725} y2={725} />
      <Plain $c="#d09a5a" $w={2} x1={168} x2={270} y1={725} y2={725} />
      <NumText $c="#b0b0b0" $s={23} x={403} y={156}>3458.79</NumText>
      <Plain $c="#b0b0b0" $w={2} x1={376} x2={398} y1={148} y2={148} />
      <Plain $c="#c89858" $w={4} x1={372} x2={1153} y1={153} y2={153} />
      <Trend $c="#d088e0" $w={2.5} points={ma60} />
      <Trend $c="#38d8e8" $w={2} points={ma20} />
      <Trend $c="#808080" $w={5} points={ma5} />
      <Trend $c="#ffff00" $w={4.5} points="48,839 1359,270" />
      <Trend $c="#ffff00" $w={4} points="1335,268 1359,270 1343,290" />
      <Trend $c="#10f010" $w={4.5} points="372,149 1223,236" />
      <Trend $c="#10f010" $w={4} points="1203,220 1223,236 1200,244" />
      <path d="M883 341 L873 341 L883 327 L893 341 L887 341 V358 H879 V341 Z" fill="#f00" />
      {callouts.map((d, i) => <CalloutPath key={i} d={d} />)}
      {notes.map(([x, y, s, c, t], i) => <NoteText key={i} x={x} y={y} $s={s} $c={c}>{t}</NoteText>)}
      <NumText $c="#e08a1e" $s={22} x={84} y={178}>7.02%</NumText>
      <NumText $c="#e08a1e" $s={22} x={84} y={468}>226.67</NumText>
      <NumText $c="#e08a1e" $s={22} x={765} y={146}>104.07</NumText>
      <NumText $c="#b4c4dc" $s={23} x={96} y={850}>2965.11</NumText>
      <Trend $c="#b4c4dc" $w={2} points="74,834 67,840 74,846 67,840 92,840" />
    </g>
    <Plain $c="#a01820" $w={2} x1={1427} x2={1427} y1={63} y2={1019} />
    {axisMain.map(([y, t]) => <NumText key={t} $c="#d01828" $s={27} x={1431} y={y + 9}>{t}</NumText>)}
  </Canvas>
);

const VolChart = () => (
  <Canvas $h={236} viewBox="47 1062 1434 236">
    <defs>
      <clipPath id="volClip"><rect x="47" y="1062" width="1380" height="240" /></clipPath>
    </defs>
    <Dotted x1={47} x2={1427} y1={1062} y2={1062} />
    <Dotted x1={47} x2={1427} y1={1180} y2={1180} />
    {vols.map(([top, up], k) => (
      <Body3 key={k} $up={up} x={cx(k) - 12} y={top} width={24} height={1296 - top} />
    ))}
    <Trend $c="#38d8e8" $w={3} points={vol20} />
    <Trend $c="#e090e8" $w={3} points={vol60} />
    <Trend $c="#808888" $w={5} points={vol5} />
    <Trend $c="#10f010" $w={4.5} points="270,1067 1223,1172" />
    <Trend $c="#10f010" $w={4} points="1203,1155 1223,1172 1200,1180" />
    <g clipPath="url(#volClip)">
      <CalloutPath d="M745 1060 V1112 H656 L712 1187 L633 1112 H543 V1060" />
      <CalloutPath d="M47 1070 H145 V1182 H77 L100 1202 L48 1182" />
      <NoteText $c="#ffd8d8" $s={29} x={556} y={1096}>跌不动了</NoteText>
      <NoteText $c="#e8921e" $s={28} x={27} y={1106}>是</NoteText>
      <NoteText $c="#e8921e" $s={28} x={32} y={1137}>个资金</NoteText>
      <NoteText $c="#e8921e" $s={28} x={27} y={1166}>动</NoteText>
    </g>
    <Plain $c="#a01820" $w={2} x1={1427} x2={1427} y1={1019} y2={1298} />
    <NumText $c="#a8b8c8" $s={27} x={1431} y={1071}>6578</NumText>
    <NumText $c="#a8b8c8" $s={27} x={1431} y={1189}>3289</NumText>
    <rect x={1429} y={1270} width={44} height={27} fill="none" stroke={DARK} strokeWidth={2} />
    <NumText $c="#c0c8d0" $s={24} x={1431} y={1293}>X10</NumText>
  </Canvas>
);

const MacdChart = () => (
  <Canvas $h={215} viewBox="47 1339 1434 215">
    <Dotted x1={47} x2={1427} y1={1339} y2={1339} />
    <Dotted x1={47} x2={1427} y1={1446} y2={1446} />
    <Trend $c="#f0f080" $w={2.5} points={dea} />
    <Trend $c="#ffffff" $w={2} points={diff} />
    {macdBars.map(([x, a, b, c]) => <Plain key={x} $c={c} $w={2} x1={x} x2={x} y1={a} y2={b} />)}
    <Plain $c="#a01820" $w={2} x1={1427} x2={1427} y1={1298} y2={1554} />
    <Plain $c="#a01820" $w={3} x1={47} x2={1427} y1={1554} y2={1554} />
    <Plain $c="#a01820" $w={2} x1={882} x2={882} y1={1554} y2={1562} />
    <NumText $c="#d01828" $s={27} x={1432} y={1349}>+137</NumText>
    <NumText $c="#d01828" $s={27} x={1432} y={1456}>+42.</NumText>
  </Canvas>
);

const Chart = () => (
  <ChartColumn>
    <LegendRow $h={40}>
      <LegendItem $w={128} $c="#d8cfc0" $cjk>日线(复权)</LegendItem>
      <LegendItem $w={105} $c="#fff" $cjk>上证指数</LegendItem>
      <LegendItem $w={181} $c="#808890">MA5: 3408.52<Arrow c="#f00000" up /></LegendItem>
      <LegendItem $w={196} $c="#20d8e0">MA20: 3347.23<Arrow c="#f00000" up /></LegendItem>
      <LegendItem $w={200} $c="#e080f8">MA60: 3179.61<Arrow c="#f00000" up /></LegendItem>
      <RightGroup>
        <MiniBtn $w={84}>删自选</MiniBtn>
        <MiniBtn $w={63}>均线</MiniBtn>
        <MiniBtn $w={37}>窗</MiniBtn>
        <MiniBtn $w={62}>预测</MiniBtn>
        <MiniBtn $w={38}>
          <svg width="26" height="26" viewBox="0 0 26 26"><path d="M0 9 H10 V2 L20 13 L10 24 V17 H0 Z M21 2 H25 V24 H21 Z" fill="#ddd" /></svg>
        </MiniBtn>
      </RightGroup>
    </LegendRow>
    <MainChart />
    <LegendRow $h={43} $top>
      <LegendItem $w={220} $c="#e8102a">总手: 287488340<Arrow c="#20d8f0" /></LegendItem>
      <LegendItem $w={264} $c="#808890">MAVOL5: 368827814<Arrow c="#20d8f0" /></LegendItem>
      <LegendItem $w={223} $c="#20d8e0">MAVOL20: 3.65亿<Arrow c="#20d8f0" /></LegendItem>
      <LegendItem $w={280} $c="#e080f8">MAVOL60: 350809807<Arrow c="#f00000" up /></LegendItem>
      <VolSelect>成交量</VolSelect>
    </LegendRow>
    <VolChart />
    <LegendRow $h={41} $top>
      <LegendItem $w={176} $c="#c8ccd8">MACD(12,26,9)</LegendItem>
      <LegendItem $w={168} $c="#10d010">MACD: -9.89<Arrow c="#20d8f0" /></LegendItem>
      <LegendItem $w={174} $c="#f4f4f4">DIFF: +42.98<Arrow c="#20d8f0" /></LegendItem>
      <LegendItem $w={180} $c="#f0f000">DEA: +47.93<Arrow c="#20d8f0" /></LegendItem>
      <MacdTabs>
        <MacdTab $w={143}>优选参数</MacdTab>
        <MacdTab $w={146} $on>默认参数</MacdTab>
        <MacdTab $w={130}>指标说明</MacdTab>
      </MacdTabs>
    </LegendRow>
    <MacdChart />
    <DateRow>08</DateRow>
    <IndexTabs>
      <IndexTab $w={642} $pad={16}>BOLL</IndexTab>
      <IndexTab $w={76}>主力</IndexTab>
      <IndexTab $w={84}>W&amp;R</IndexTab>
      <IndexTab $w={70}>DMI</IndexTab>
      <IndexTab $w={80}>BIAS</IndexTab>
      <IndexTab $w={64}>ASI</IndexTab>
      <IndexTab $w={59}>VR</IndexTab>
      <IndexTab $w={95}>ARBR</IndexTab>
      <IndexTab $w={80}>DPO</IndexTab>
      <IndexTab $w={80}>TRIX</IndexTab>
      <IndexTab $w={84}>新DMA</IndexTab>
      <IndexScroll />
    </IndexTabs>
    <StatusRow>
      <StatusCell $w={647} $pad={11} $weight={700}>3.00</StatusCell>
      <StatusCell $w={124} $weight={700}>+157.08</StatusCell>
      <StatusCell $w={121} $weight={700}>+1.18%</StatusCell>
      <StatusCell $w={106} $c="#20e0f0" $weight={700}>4830亿</StatusCell>
      <StatusSep />
      <StatusCell $w={39} $c="#c0c0c0">创</StatusCell>
      <StatusCell $w={130} $weight={700}>2632.45</StatusCell>
      <StatusCell $w={114} $weight={700}>+44.59</StatusCell>
      <StatusCell $w={120} $weight={700}>+1.72%</StatusCell>
      <StatusCell $w={30} $c="#20e0f0" $weight={700}>10</StatusCell>
    </StatusRow>
  </ChartColumn>
);

const Word = () => (
  <WordWindow>
    <OfficeBtn viewBox="0 0 72 70">
      <defs>
        <radialGradient id="orb" cx="50%" cy="35%" r="70%"><stop offset="0" stopColor="#ffffff" /><stop offset="1" stopColor="#b8c4d0" /></radialGradient>
      </defs>
      <ellipse cx="36" cy="35" rx="35" ry="34" fill="url(#orb)" stroke="#8ca0b4" />
      <rect x="14" y="11" width="20" height="23" rx="4" fill="none" stroke="#d8401c" strokeWidth="6" />
      <rect x="38" y="15" width="18" height="19" rx="3" fill="none" stroke="#2f7fd0" strokeWidth="5" />
      <rect x="14" y="38" width="20" height="20" rx="3" fill="none" stroke="#f0a010" strokeWidth="6" />
      <rect x="38" y="38" width="18" height="18" rx="3" fill="none" stroke="#6ab02c" strokeWidth="5" />
    </OfficeBtn>
    <TitleBar>
      <Qat>
        <svg width="26" height="28" viewBox="0 0 26 28"><rect width="26" height="28" rx="2" fill="#4a58a8" /><rect x="5" width="16" height="13" fill="#e8ecf8" /><rect x="7" y="18" width="12" height="10" fill="#1a2040" /></svg>
        <svg width="28" height="26" viewBox="0 0 28 26"><path d="M4 2 V14 H16 L11 9 C14 6 20 8 20 14 C20 18 18 21 14 23 C22 23 26 17 25 11 C23 3 13 1 7 5 Z" fill="#2a7ed0" /></svg>
        <svg width="26" height="28" viewBox="0 0 26 28"><path d="M13 3 A10 11 0 1 0 23 14" fill="none" stroke="#a8b4c0" strokeWidth="5" /><path d="M18 0 V10 H26 Z" fill="#a8b4c0" /></svg>
        <QatArrow />
      </Qat>
      <TitleText>2020年 - Microsoft Word</TitleText>
      <WinButtons>
        <WinBtn><svg width="20" height="14" viewBox="0 0 20 14"><rect x="1" y="2" width="18" height="10" fill="#eee" stroke="#556" strokeWidth="2" /></svg></WinBtn>
        <WinBtn><svg width="18" height="14" viewBox="0 0 18 14"><rect x="1" y="-4" width="16" height="16" fill="none" stroke="#556" strokeWidth="2" /></svg></WinBtn>
        <WinBtn><svg width="20" height="12" viewBox="0 0 20 12"><path d="M4 -2 L10 5 L16 -2 M4 11 L10 5 L16 11" fill="none" stroke="#556" strokeWidth="3" /></svg></WinBtn>
      </WinButtons>
    </TitleBar>
    <TabBar>
      <WordTab>开始</WordTab><WordTab>插入</WordTab><WordTab>页面布局</WordTab><WordTab>引用</WordTab><WordTab>邮件</WordTab><WordTab>审阅</WordTab><WordTab>视图</WordTab>
      <HelpWrap>
        <svg width="26" height="28" viewBox="0 0 26 28"><ellipse cx="13" cy="14" rx="12" ry="13" fill="#2a70d8" stroke="#d8e8f8" strokeWidth="2" /><text x="13" y="22" textAnchor="middle" fill="#fff" fontSize="20" fontWeight="700" fontFamily="Liberation Sans">?</text></svg>
      </HelpWrap>
    </TabBar>
    <RibbonBand>
      <RulerIcon viewBox="0 0 26 34">
        <rect x="4" y="-6" width="18" height="4" fill="#47608f" />
        <rect x="3" y="2" width="20" height="26" fill="#e8ecf2" stroke="#556" strokeDasharray="3 2" />
      </RulerIcon>
    </RibbonBand>
    <MainRow>
      <LeftEdge />
      <DocColumn>
        <DocPage>
          <CornerMark $side="left" />
          <CornerMark $side="right" />
          <DocLine>＞2020 年 8 月 21 日 5ma 下高位缩量十字星。<ParaMark>↵</ParaMark></DocLine>
          <DocLine $width={1014}>＞重点一：又经过了一周时间在箱体上半部分的震荡，</DocLine>
          <DocLine $tracking={1.15}>指数也曾试图寻找突破<Squeeze>，</Squeeze>但是无奈于量能始终无法放出，</DocLine>
          <DocLine $width={1014}>最终无功而返，当前 20ma 和上升趋势线岌岌可危，关</DocLine>
          <DocLine $width={1014}>键点位也是随时可以告破，所以盘给人一种摇摆不定的</DocLine>
          <DocLine>感觉，我认为去箱体下半部的动作会来。<ParaMark>↵</ParaMark></DocLine>
          <DocLine $width={1014}>＞重点二：创业板那头问题非常大，我认为所有的反弹</DocLine>
          <DocLine $width={1014}>都是逃命，会有很长一段时间的调整，无论是调整的时</DocLine>
          <DocLine>间和空间都没有到位，继续等待调整结束。<ParaMark>↵</ParaMark></DocLine>
          <DocLine $width={1014}>＞重点三：想要突破 3456，其实只需要一件事情放出</DocLine>
          <DocLine $width={1014}>量能来即可，但是想要等到量出来是何其的难，而且这</DocLine>
          <DocLine $width={1014}>个高位我看到的是越震荡，盘越弱。总结下来，在创业</DocLine>
          <DocLine $width={1014}>板残废的情况下，这个盘我经过了算命，未来即便去了</DocLine>
          <DocLine $width={1014}>高位也不会有量能放出来，在多空均衡的背景下，纪律</DocLine>
          <DocLine>就是做减法而不能做加法。<ParaMark>↵</ParaMark></DocLine>
          <DocLine $indent>视频解盘周末放出<ParaMark>↵</ParaMark></DocLine>
          <DocLine $indent>继续听歌<ParaMark>↵</ParaMark></DocLine>
        </DocPage>
        <HScroll>
          <HLeft><Tri $dir="left" /></HLeft>
          <HThumb />
          <HRight><Tri $dir="right" /></HRight>
        </HScroll>
      </DocColumn>
      <VScroll>
        <VUp><Tri $dir="up" /></VUp>
        <VThumb />
        <VTrack><Tri $dir="down" /></VTrack>
        <VBrowse>
          <svg width="20" height="20" viewBox="0 0 20 20"><path d="M10 0 L15 6 H5 Z M3 7 H17 V9 H3 Z M10 9 L16 16 H4 Z" fill="#111" /></svg>
          <svg width="16" height="16" viewBox="0 0 16 16"><circle cx="8" cy="8" r="6.5" fill="#bbb" stroke="#111" strokeWidth="2" /></svg>
          <svg width="20" height="20" viewBox="0 0 20 20"><path d="M10 20 L15 14 H5 Z M3 11 H17 V13 H3 Z M10 11 L16 4 H4 Z" fill="#111" /></svg>
        </VBrowse>
      </VScroll>
      <RightEdge />
    </MainRow>
    <StatusBar />
  </WordWindow>
);

export default function App() {
  return (
    <Page>
      <Global />
      <TradeWindow>
        <TopBar />
        <Body>
          <SideTabs />
          <Chart />
        </Body>
      </TradeWindow>
      <Gutter />
      <Word />
      <Banner>
        <BannerTop>
          不谈时政，不谈个股，仅谈趋势<br />内容仅供参考，不构成投资建议
        </BannerTop>
        <BannerBottom>
          <BannerText>娅爸知识星球<br />超低佣金开户</BannerText>
          <QrBox viewBox="0 0 33 33" shapeRendering="crispEdges">
            {qrCells.map(([x, y]) => <rect key={`${x}-${y}`} x={x} y={y} width={1} height={1} fill="#000" />)}
            <circle cx="16.5" cy="16.5" r="2.2" fill="none" stroke="#3cb898" strokeWidth="0.6" />
          </QrBox>
        </BannerBottom>
      </Banner>
    </Page>
  );
}
